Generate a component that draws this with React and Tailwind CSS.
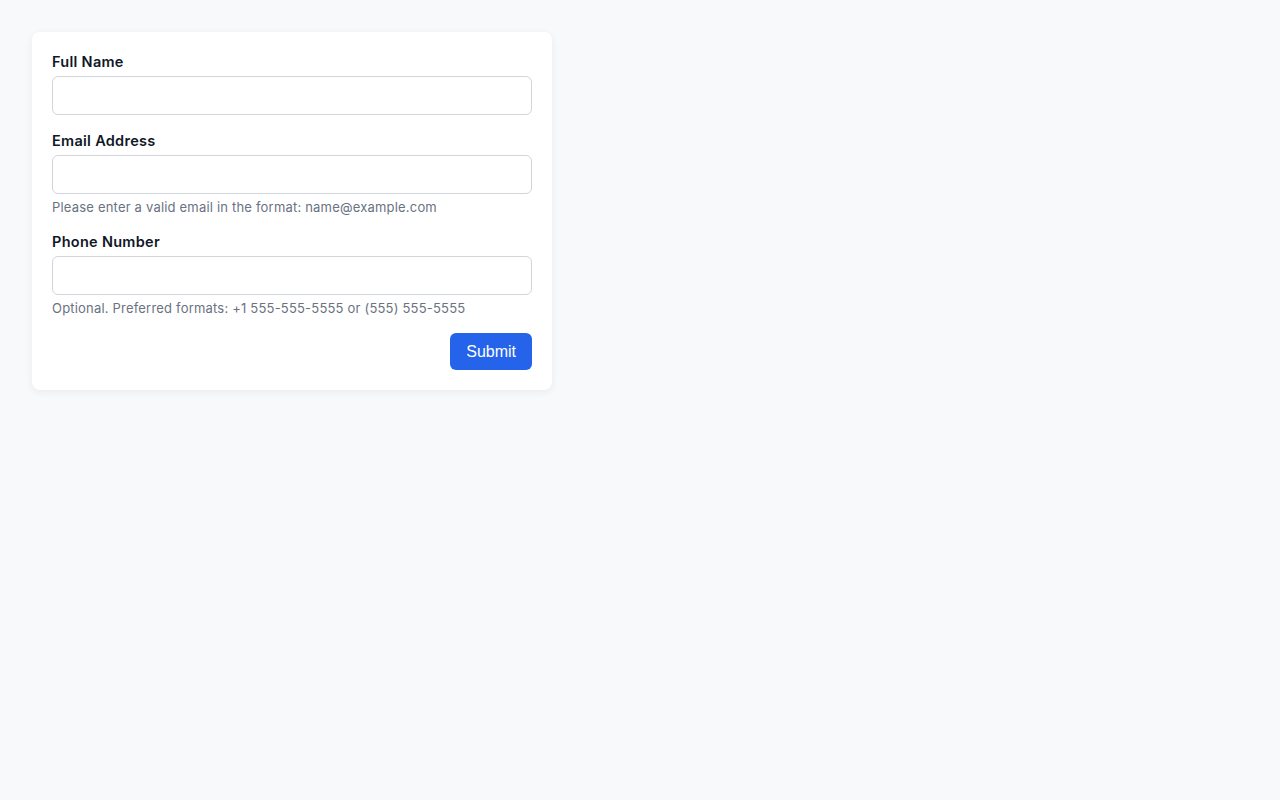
import React from 'react';

const Field = ({ label, type = 'text', help }) => (
    <div className="flex flex-col">
        <label className="text-[14.5px] leading-5 font-semibold tracking-[0.02em] text-gray-900 mb-1">{label}</label>
        <input
            type={type}
            className="h-[39px] w-full px-3 border border-gray-300 rounded-md bg-white outline-none"
        />
        {help && <p className="mt-[5px] text-[13px] leading-[17px] tracking-[0.015em] text-gray-500">{help}</p>}
    </div>
);

const App = () => {
    return (
        <div className="min-h-screen bg-[#f8f9fb] p-8 font-['Inter',sans-serif]">
            <form className="w-[520px] bg-white rounded-lg shadow-[0_2px_8px_rgba(0,0,0,0.06)] p-5 flex flex-col gap-4">
                <Field label="Full Name" />
                <Field
                    label="Email Address"
                    type="email"
                    help="Please enter a valid email in the format: name@example.com"
                />
                <Field
                    label="Phone Number"
                    type="tel"
                    help="Optional. Preferred formats: +1 555-555-5555 or (555) 555-5555"
                />
                <div className="flex justify-end">
                    <button
                        type="button"
                        className="h-[37px] px-4 rounded-md bg-[#2563eb] text-white text-[16px] font-['Liberation_Sans',sans-serif]"
                    >
                        Submit
                    </button>
                </div>
            </form>
        </div>
    );
};

export default App;
